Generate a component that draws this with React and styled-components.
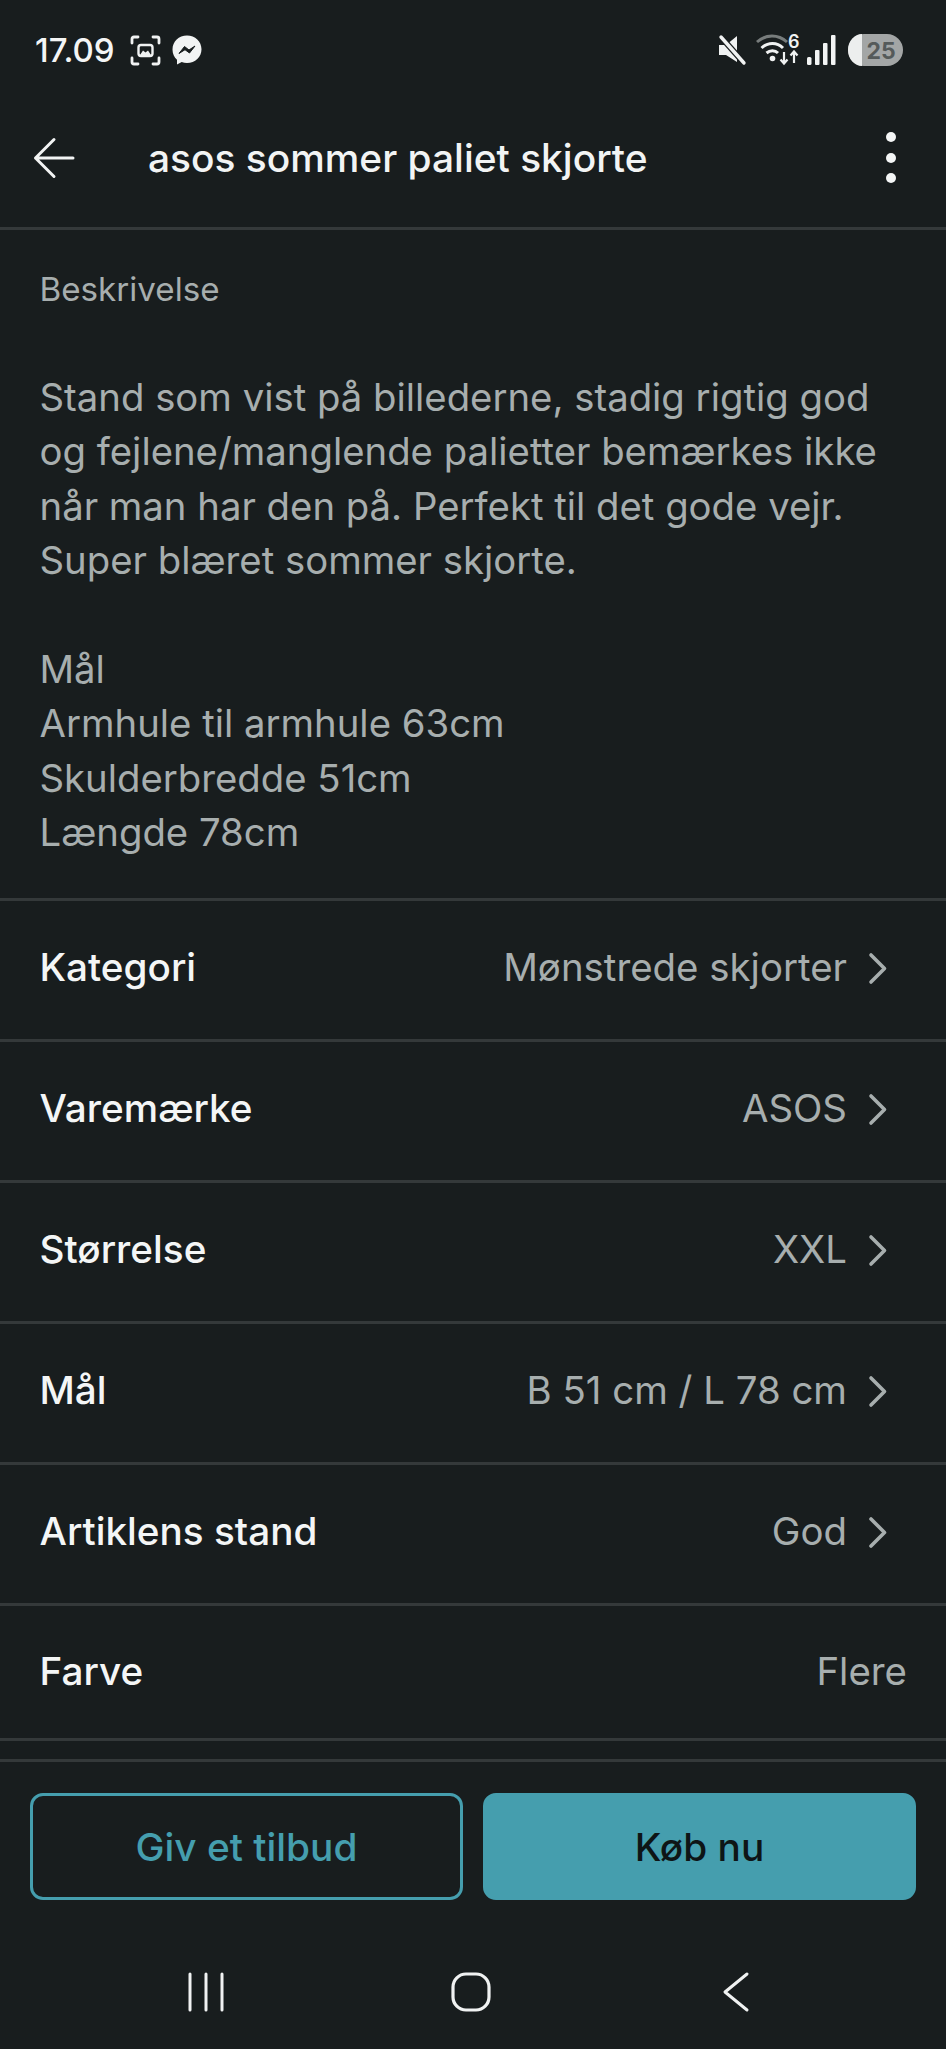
import React from "react";
import styled, { createGlobalStyle } from "styled-components";

const Global = createGlobalStyle`
  html, body { margin: 0; padding: 0; background: #181d1e; }
  * { box-sizing: border-box; }
`;

const Screen = styled.div`
  width: 946px;
  height: 2049px;
  overflow: hidden;
  display: flex;
  flex-direction: column;
  background: #181d1e;
  font-family: Inter, "Noto Sans", sans-serif;
  color: #f2f4f4;
`;

const StatusBar = styled.div`
  height: 100px;
  flex: none;
  display: flex;
  align-items: center;
  justify-content: space-between;
  padding: 0 43px 0 35px;
`;
const StatusGroup = styled.div`
  display: flex;
  align-items: center;
`;
const Time = styled.span`
  font-size: 33px;
  font-weight: 500;
  letter-spacing: 0;
  margin-right: 15px;
  color: #f4f5f5;
`;
const Svg = styled.svg`
  display: block;
  flex: none;
  overflow: visible;
  margin-left: ${(p) => p.$ml || 0}px;
`;

const Toolbar = styled.div`
  height: 130px;
  flex: none;
  display: flex;
  align-items: center;
  padding: 0 0 12px 34px;
  border-bottom: 3px solid #34393a;
`;
const Title = styled.h1`
  margin: 0 0 0 74px;
  flex: 1;
  font-size: 38.9px;
  font-weight: 500;
  color: #f2f4f4;
`;
const Dots = styled.div`
  display: flex;
  flex-direction: column;
  gap: 10.5px;
  margin-right: 50px;
`;
const Dot = styled.span`
  width: 10px;
  height: 10px;
  border-radius: 50%;
  background: #f4f6f6;
`;

const Description = styled.section`
  padding: 41px 39.5px 38px;
  border-bottom: 3px solid #34393a;
  color: #a7aeae;
`;
const DescLabel = styled.div`
  font-size: 33.2px;
  line-height: 36px;
  margin-bottom: 63px;
`;
const DescText = styled.p`
  margin: 0;
  font-size: 38.3px;
  line-height: 54.4px;
  white-space: pre-line;
`;

const Row = styled.div`
  height: ${(p) => p.$h || 141}px;
  flex: none;
  display: flex;
  align-items: center;
  justify-content: space-between;
  padding: 0 41px ${(p) => (p.$h ? 1 : 6)}px 39.5px;
  border-bottom: 3px solid #34393a;
`;
const RowLabel = styled.span`
  font-size: 38.7px;
  font-weight: 500;
  color: #f4f6f6;
`;
const RowValue = styled.span`
  display: flex;
  align-items: center;
  gap: 20px;
  font-size: 38.4px;
  color: #a7aeae;
  margin-right: ${(p) => (p.$plain ? -2 : 18)}px;
`;

const Spacer = styled.div`
  height: 21px;
  flex: none;
  border-bottom: 3px solid #34393a;
`;

const Actions = styled.div`
  display: flex;
  gap: 20px;
  padding: 31px 30px 0;
  flex: none;
`;
const ActionButton = styled.button`
  flex: 1;
  height: 107px;
  border-radius: 13px;
  border: 3px solid #459eae;
  background: ${(p) => (p.$solid ? "#459eae" : "transparent")};
  color: ${(p) => (p.$solid ? "#0e1516" : "#459eae")};
  font-family: inherit;
  font-size: 38.8px;
  font-weight: 500;
  padding: 0;
`;

const NavBar = styled.div`
  flex: 1;
  display: flex;
  align-items: center;
  padding-top: 35px;
`;
const NavSlot = styled.div`
  width: ${(p) => p.$w}px;
  display: flex;
  justify-content: center;
  flex: none;
`;

const Chevron = () => (
  <Svg width="20" height="30" viewBox="0 0 20 30" fill="none">
    <path d="M4 3 L17.500 16.500 L4 30" stroke="#a7aeae" strokeWidth="3.600" strokeLinecap="round" strokeLinejoin="round" />
  </Svg>
);

const rows = [
  ["Kategori", "Mønstrede skjorter"],
  ["Varemærke", "ASOS"],
  ["Størrelse", "XXL"],
  ["Mål", "B 51 cm / L 78 cm"],
  ["Artiklens stand", "God"],
];

export default function App() {
  return (
    <Screen>
      <Global />
      <StatusBar>
        <StatusGroup>
          <Time>17.09</Time>
          <Svg width="31" height="31" viewBox="0 0 31 31" fill="none">
            <path d="M8 2 H4 Q2 2 2 4 V8 M23 2 H27 Q29 2 29 4 V8 M2 23 V27 Q2 29 4 29 H8 M29 23 V27 Q29 29 27 29 H23" stroke="#f0f2f2" strokeWidth="2.800" strokeLinecap="round" />
            <rect x="8.5" y="10" width="14" height="11" rx="2.5" stroke="#f0f2f2" strokeWidth="2.400" />
            <path d="M10 20 L13 15.5 L15.5 17.5 L18 15.5 L21 20 Z" fill="#f0f2f2" />
          </Svg>
          <Svg $ml={11} width="30" height="30" viewBox="0 0 30 30">
            <path d="M15 0.5 C6.8 0.5 0.5 6.5 0.5 14.4 C0.5 18.6 2.2 22.200 5 24.700 V29.500 L9.700 27.100 C11.300 27.700 13.100 28 15 28 C23.200 28 29.500 22.100 29.500 14.300 C29.500 6.500 23.200 0.500 15 0.500 Z" fill="#f2f4f4" />
            <path d="M7 18.500 L12.500 11.500 L17 15 L23 11 L17.500 18 L13 14.700 Z" fill="#181d1e" stroke="#181d1e" strokeWidth="1" strokeLinejoin="round" />
          </Svg>
        </StatusGroup>
        <StatusGroup>
          <Svg width="28" height="30" viewBox="0 0 28 30" fill="none">
            <path d="M1 10 H8 L19 1 V27 L8 20 H1 Z" fill="#f0f2f2" />
            <path d="M3 2 L26 28" stroke="#181d1e" strokeWidth="6" />
            <path d="M3 2 L26 28" stroke="#f0f2f2" strokeWidth="3.400" strokeLinecap="round" />
          </Svg>
          <Svg $ml={10} width="44" height="32" viewBox="0 0 44 32" fill="none">
            <path d="M1 8 C10 0 22 0 31 8" stroke="#777c7c" strokeWidth="3" />
            <path d="M5.500 14 C12 8 21 8 27 14" stroke="#f0f2f2" strokeWidth="3" />
            <path d="M10.500 19 C14 16 19 16 22 19" stroke="#f0f2f2" strokeWidth="3" />
            <circle cx="16.500" cy="24.500" r="2.800" fill="#f0f2f2" />
            <text x="32" y="14" fontSize="18" fontWeight="600" fontFamily="Inter, sans-serif" fill="#f0f2f2">6</text>
            <path d="M28 18 V29 M24.500 25.500 L28 29.500 L31.500 25.500 M38 29 V18 M34.500 21.500 L38 17.500 L41.500 21.500" stroke="#f0f2f2" strokeWidth="2.200" />
          </Svg>
          <Svg $ml={7} width="29" height="30" viewBox="0 0 29 30" fill="#f2f4f4">
            <rect x="0" y="22" width="4.500" height="8" rx="1.500" />
            <rect x="8" y="15" width="4.500" height="15" rx="1" />
            <rect x="16" y="8" width="4.500" height="22" rx="1" />
            <rect x="24" y="0" width="4.500" height="30" rx="1" />
          </Svg>
          <Svg $ml={12} width="55" height="32" viewBox="0 0 55 32">
            <rect width="55" height="32" rx="16" fill="#a3a6a6" />
            <path d="M14 0 A14 16 0 0 0 14 32 Z" fill="#eceeee" />
            <text x="33" y="25" textAnchor="middle" fontSize="23" fontWeight="700" fontFamily="Inter, sans-serif" fill="#555a5a">25</text>
          </Svg>
        </StatusGroup>
      </StatusBar>

      <Toolbar>
        <Svg width="40" height="40" viewBox="0 0 40 40" fill="none">
          <path d="M20 1.500 L1.500 20 L20 38.500 M1.500 20 H39" stroke="#f2f4f4" strokeWidth="3" strokeLinecap="round" strokeLinejoin="round" />
        </Svg>
        <Title>asos sommer paliet skjorte</Title>
        <Dots>
          <Dot />
          <Dot />
          <Dot />
        </Dots>
      </Toolbar>

      <Description>
        <DescLabel>Beskrivelse</DescLabel>
        <DescText>
          {"Stand som vist på billederne, stadig rigtig god\nog fejlene/manglende palietter bemærkes ikke\nnår man har den på. Perfekt til det gode vejr.\nSuper blæret sommer skjorte.\n\nMål\nArmhule til armhule 63cm\nSkulderbredde 51cm\nLængde 78cm"}
        </DescText>
      </Description>

      {rows.map(([label, value]) => (
        <Row key={label}>
          <RowLabel>{label}</RowLabel>
          <RowValue>
            {value}
            <Chevron />
          </RowValue>
        </Row>
      ))}
      <Row $h={135}>
        <RowLabel>Farve</RowLabel>
        <RowValue $plain>Flere</RowValue>
      </Row>
      <Spacer />

      <Actions>
        <ActionButton>Giv et tilbud</ActionButton>
        <ActionButton $solid>Køb nu</ActionButton>
      </Actions>

      <NavBar>
        <NavSlot $w={412}>
          <Svg width="36" height="38" viewBox="0 0 36 38" fill="none">
            <path d="M2 1 V37 M18 1 V37 M34 1 V37" stroke="#f0f2f2" strokeWidth="3" strokeLinecap="round" />
          </Svg>
        </NavSlot>
        <NavSlot $w={118}>
          <Svg width="40" height="40" viewBox="0 0 40 40" fill="none">
            <rect x="2" y="2" width="36" height="36" rx="13" stroke="#f0f2f2" strokeWidth="3.200" />
          </Svg>
        </NavSlot>
        <NavSlot $w={411}>
          <Svg width="26" height="40" viewBox="0 0 26 40" fill="none">
            <path d="M24 2 L2 20 L24 38" stroke="#f0f2f2" strokeWidth="3" strokeLinecap="round" strokeLinejoin="round" />
          </Svg>
        </NavSlot>
      </NavBar>
    </Screen>
  );
}
